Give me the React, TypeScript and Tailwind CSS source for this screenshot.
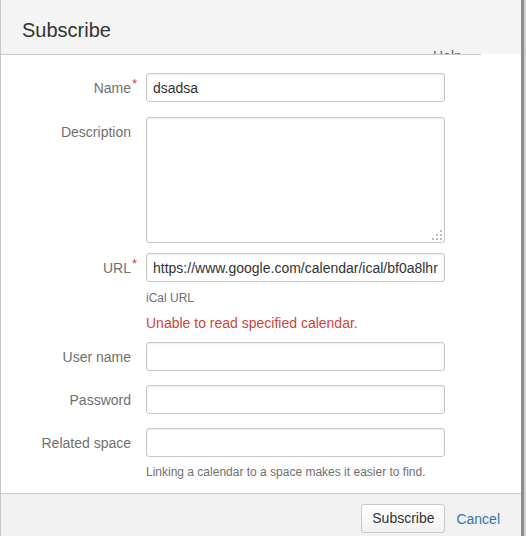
import React from 'react';

const inputCls =
  'block w-[299px] h-[29px] px-[6px] rounded-[3px] border border-[#c8c8c8] bg-white text-[14px] text-[#333333] shadow-[inset_0_1px_2px_rgba(0,0,0,0.07)] outline-none';

function Label({ text, required }: { text: string; required?: boolean }) {
  return (
    <div className="w-[145px] shrink-0 pr-[15px] pt-[5px] text-right text-[14px] leading-[20px] text-[#707070]">
      <span className="relative">
        {text}
        {required && (
          <span className="absolute left-[calc(100%+1px)] top-[-6px] text-[13px] text-[#d04437]">*</span>
        )}
      </span>
    </div>
  );
}

function Row({ label, required, children, className }: { label: string; required?: boolean; children: React.ReactNode; className?: string }) {
  return (
    <div className={`flex ${className ?? ''}`}>
      <Label text={label} required={required} />
      {children}
    </div>
  );
}

function Grip() {
  // dotted resize handle, bottom right of the textarea
  const dots = [
    [8, 0],
    [4, 4],
    [8, 4],
    [0, 8],
    [4, 8],
    [8, 8],
  ];
  return (
    <svg className="pointer-events-none absolute right-[3px] bottom-[3px]" width="10" height="10" viewBox="0 0 10 10">
      {dots.map(([x, y], i) => (
        <rect key={i} x={x} y={y} width="2" height="2" fill="#bdbdbd" />
      ))}
    </svg>
  );
}

export default function App() {
  return (
    <div className="flex w-[526px] h-[536px] bg-[#d0d0d0] font-['Liberation_Sans',Arial,sans-serif]">
      <div className="flex flex-col w-[524px] h-full bg-white border-l border-l-[#c8c8c8] border-r-[3px] border-r-[#8c8c8c]">
        <div className="relative h-[54px] shrink-0 overflow-hidden bg-[#f4f4f4]">
          <h2 className="pl-[21px] pt-[18px] text-[20px] leading-[24px] text-[#333333]">Subscribe</h2>
          <span className="absolute left-[432px] top-[48px] text-[14px] leading-[16px] text-[#666666]">Help</span>
        </div>
        <div className="h-[1px] w-[480px] bg-[#cccccc]" />

        <div className="flex flex-1 flex-col">
          <Row label="Name" required className="mt-[18px]">
            <input className={inputCls} defaultValue="dsadsa" />
          </Row>
          <Row label="Description" className="mt-[15px]">
            <div className="relative">
              <textarea className="block w-[299px] h-[126px] resize-none px-[6px] py-[4px] rounded-[3px] border border-[#c8c8c8] bg-white text-[14px] text-[#333333] shadow-[inset_0_1px_2px_rgba(0,0,0,0.07)] outline-none" />
              <Grip />
            </div>
          </Row>
          <Row label="URL" required className="mt-[10px]">
            <input
              className={inputCls}
              defaultValue="https://www.google.com/calendar/ical/bf0a8lhra7q1qbgsmps8lho3ig%40group.calendar.google.com/public/basic.ics"
            />
          </Row>
          <div className="ml-[145px] mt-[8px] text-[12px] leading-[16px] text-[#707070]">iCal URL</div>
          <div className="ml-[145px] mt-[7px] text-[14px] leading-[20px] text-[#d04437]">Unable to read specified calendar.</div>
          <Row label="User name" className="mt-[9px]">
            <input className={inputCls} />
          </Row>
          <Row label="Password" className="mt-[14px]">
            <input type="password" className={inputCls} />
          </Row>
          <Row label="Related space" className="mt-[14px]">
            <input className={inputCls} />
          </Row>
          <div className="ml-[145px] mt-[7px] text-[12px] leading-[16px] text-[#707070]">
            Linking a calendar to a space makes it easier to find.
          </div>
        </div>

        <div className="flex h-[43px] shrink-0 items-start justify-end gap-[11px] border-t border-t-[#cccccc] bg-[#f2f2f2] pr-[21px] pt-[10px]">
          <button className="h-[29px] w-[84px] rounded-[3px] border border-[#c8c8c8] bg-gradient-to-b from-white to-[#f2f2f2] text-[14px] text-[#333333]">
            Subscribe
          </button>
          <a className="pt-[5px] text-[14px] leading-[20px] text-[#3b73af]" href="#">
            Cancel
          </a>
        </div>
      </div>
    </div>
  );
}
